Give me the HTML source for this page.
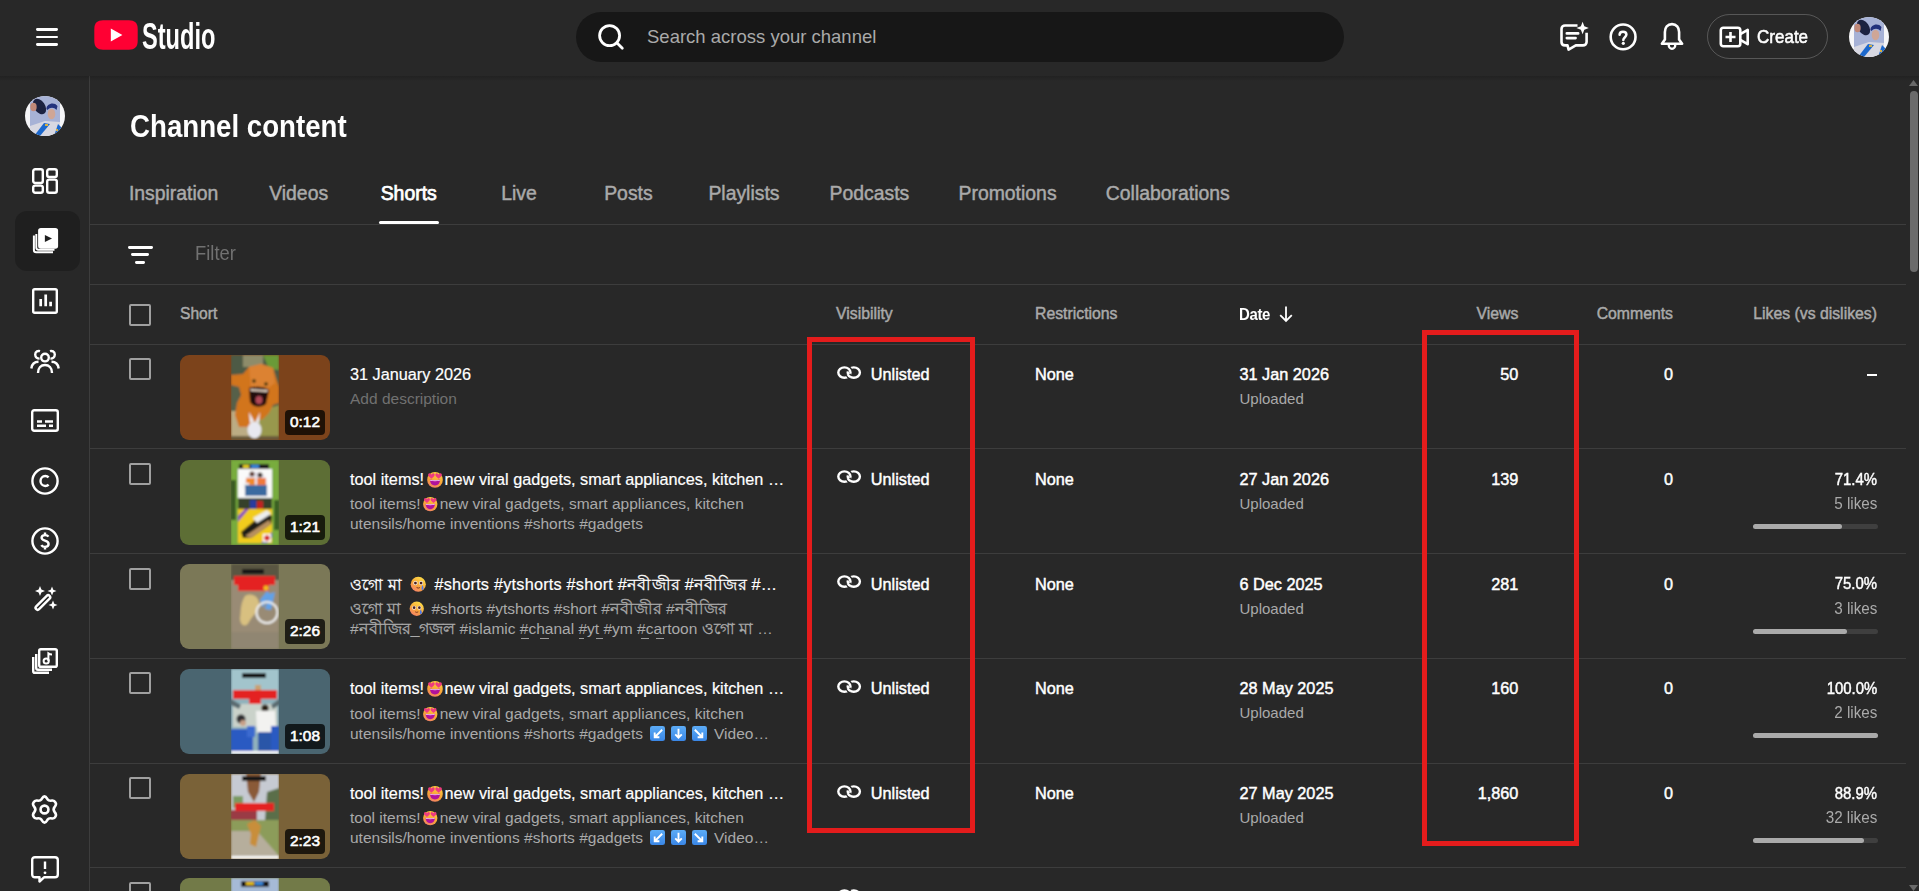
<!DOCTYPE html>
<html><head><meta charset="utf-8"><title>Channel content - YouTube Studio</title>
<style>
html,body{margin:0;padding:0;}html{overflow:hidden;background:#282828;}
body{width:1919px;height:891px;overflow:hidden;background:#282828;position:relative;font-family:"Liberation Sans",sans-serif;}
.t{position:absolute;white-space:nowrap;}
.r{position:absolute;}
svg{position:absolute;overflow:visible;}
</style></head><body>
<div class="r" style="left:0px;top:0px;width:1919px;height:76px;background:#282828;"></div>
<div class="r" style="left:0px;top:76px;width:1919px;height:5px;background:linear-gradient(rgba(0,0,0,0.16),rgba(0,0,0,0));z-index:3;"></div>
<div class="r" style="left:36px;top:28.1px;width:22px;height:2.8px;background:#fff;border-radius:1.4px;"></div>
<div class="r" style="left:36px;top:35.6px;width:22px;height:2.8px;background:#fff;border-radius:1.4px;"></div>
<div class="r" style="left:36px;top:43.0px;width:22px;height:2.8px;background:#fff;border-radius:1.4px;"></div>
<svg style="left:94px;top:20px" width="44" height="30" viewBox="0 0 44 30"><path d="M9 0.3H35C40.5 0.3 43.7 3 43.7 9V21C43.7 27 40.5 29.7 35 29.7H9C3.5 29.7 0.3 27 0.3 21V9C0.3 3 3.5 0.3 9 0.3Z" fill="#ff0033"/><path d="M16.8 8.6L28.4 15L16.8 21.4Z" fill="#fff"/></svg>
<div class="t " style="top:14.53px;left:141.60px;font-size:36px;line-height:43.2px;color:#fff;font-weight:700;transform:scaleX(0.655);transform-origin:0 0;">Studio</div>
<div class="r" style="left:576px;top:12px;width:768px;height:50px;background:#171717;border-radius:25px;"></div>
<svg style="left:596px;top:22px" width="30" height="30" viewBox="0 0 30 30"><circle cx="13.6" cy="13.6" r="10" fill="none" stroke="#fff" stroke-width="2.8"/><path d="M20.8 20.8L26.3 26.3" stroke="#fff" stroke-width="2.8" stroke-linecap="round"/></svg>
<div class="t " style="top:25.69px;left:647.00px;font-size:18.5px;line-height:22.2px;color:#aaaaaa;">Search across your channel</div>
<svg style="left:1558px;top:21px" width="32" height="32" viewBox="0 0 32 32"><path d="M19.5 4.5H7C5 4.5 3.5 6 3.5 8V21C3.5 23 5 24.4 7 24.4H9.5L10.6 28.6L17.8 24.4H25C27 24.4 28.6 23 28.6 21V11.8" fill="none" stroke="#fff" stroke-width="2.6" stroke-linejoin="round"/><path d="M8.8 12.4H20.2M8.8 17.1H17.6" stroke="#fff" stroke-width="2.6" stroke-linecap="round"/><path d="M24.6 0.8L26.3 5.3L30.8 7L26.3 8.7L24.6 13.2L22.9 8.7L18.4 7L22.9 5.3Z" fill="#fff"/></svg>
<svg style="left:1608px;top:22px" width="30" height="30" viewBox="0 0 30 30"><circle cx="15.1" cy="14.9" r="12.4" fill="none" stroke="#fff" stroke-width="2.6"/><path d="M11.6 12.8C11.6 10.8 13.1 9.7 15 9.7C16.9 9.7 18.4 10.9 18.4 12.6C18.4 15.1 15.3 15.4 15.3 18.1" fill="none" stroke="#fff" stroke-width="2.5" stroke-linecap="round"/><circle cx="15.3" cy="21.3" r="1.6" fill="#fff"/></svg>
<svg style="left:1658px;top:21px" width="28" height="32" viewBox="0 0 28 32"><path d="M14 3.1C9.6 3.1 6.9 6.5 6.9 11V18.6L3.9 22.8H24.1L21.1 18.6V11C21.1 6.5 18.4 3.1 14 3.1Z" fill="none" stroke="#fff" stroke-width="2.6" stroke-linejoin="round"/><path d="M10.7 23.4A3.3 4.4 0 0 0 17.3 23.4" fill="none" stroke="#fff" stroke-width="2.4"/></svg>
<div class="r" style="left:1707px;top:14px;width:121px;height:45px;background:transparent;box-sizing:border-box;border:1px solid rgba(255,255,255,0.22);border-radius:22.5px;"></div>
<svg style="left:1719px;top:26px" width="32" height="22" viewBox="0 0 32 22"><rect x="1.8" y="1.8" width="19.5" height="18.4" rx="2.5" fill="none" stroke="#fff" stroke-width="2.6"/><path d="M6.5 11H16.5M11.5 6V16" stroke="#fff" stroke-width="2.6"/><path d="M21.3 8.2L28.7 3.8V18.2L21.3 13.8" fill="none" stroke="#fff" stroke-width="2.6" stroke-linejoin="round"/></svg>
<div class="t " style="top:25.50px;left:1756.60px;font-size:18.6px;line-height:22.32px;color:#fff;-webkit-text-stroke:0.55px #fff;transform:scaleX(0.915);transform-origin:0 0;">Create</div>
<svg style="left:1849px;top:17px" width="40" height="40" viewBox="0 0 40 40"><defs><clipPath id="ca"><circle cx="20" cy="20" r="20"/></clipPath><filter id="fa"><feGaussianBlur stdDeviation="0.5"/></filter></defs><g clip-path="url(#ca)"><rect width="40" height="40" fill="#f6f6f8"/><g filter="url(#fa)"><rect x="5" y="0" width="30" height="40" fill="#a7b2d6"/><ellipse cx="14.5" cy="10.5" rx="5.5" ry="8.5" transform="rotate(-35 14.5 10.5)" fill="#1c2040"/><ellipse cx="8.5" cy="11" rx="3.2" ry="4.2" fill="#c08878"/><ellipse cx="26.5" cy="18" rx="3.8" ry="5.2" fill="#cfa696"/><path d="M21.5 13C21 8 29 5 32.5 10L31.5 14C29 11 25 11 22.5 14Z" fill="#24307c"/><path d="M5 30L20 25L35 26V40H5Z" fill="#d8d8e2"/><path d="M9 40L19 27L25 28L15 40Z" fill="#1f68cc"/><path d="M29 40L33 28L36 31V40Z" fill="#1f68cc"/><rect x="20" y="28" width="3" height="2" fill="#d8b040"/><rect x="31" y="33" width="2" height="2" fill="#d8b040"/></g></g></svg>
<div class="r" style="left:89px;top:76px;width:1px;height:815px;background:#3d3d3d;"></div>
<svg style="left:25px;top:96px" width="40" height="40" viewBox="0 0 40 40"><defs><clipPath id="cb"><circle cx="20" cy="20" r="20"/></clipPath><filter id="fb"><feGaussianBlur stdDeviation="0.5"/></filter></defs><g clip-path="url(#cb)"><rect width="40" height="40" fill="#f6f6f8"/><g filter="url(#fb)"><rect x="5" y="0" width="30" height="40" fill="#a7b2d6"/><ellipse cx="14.5" cy="10.5" rx="5.5" ry="8.5" transform="rotate(-35 14.5 10.5)" fill="#1c2040"/><ellipse cx="8.5" cy="11" rx="3.2" ry="4.2" fill="#c08878"/><ellipse cx="26.5" cy="18" rx="3.8" ry="5.2" fill="#cfa696"/><path d="M21.5 13C21 8 29 5 32.5 10L31.5 14C29 11 25 11 22.5 14Z" fill="#24307c"/><path d="M5 30L20 25L35 26V40H5Z" fill="#d8d8e2"/><path d="M9 40L19 27L25 28L15 40Z" fill="#1f68cc"/><path d="M29 40L33 28L36 31V40Z" fill="#1f68cc"/><rect x="20" y="28" width="3" height="2" fill="#d8b040"/><rect x="31" y="33" width="2" height="2" fill="#d8b040"/></g></g></svg>
<div class="r" style="left:15px;top:211px;width:65px;height:60px;background:#1f1f1f;border-radius:12px;"></div>
<svg style="left:32px;top:168px" width="26" height="26" viewBox="0 0 26 26"><rect x="1.2" y="1.2" width="9.6" height="13.8" rx="2" fill="none" stroke="#fff" stroke-width="2.4"/><rect x="15.2" y="1.2" width="9.6" height="7.8" rx="2" fill="none" stroke="#fff" stroke-width="2.4"/><rect x="1.2" y="17.6" width="9.6" height="7.2" rx="2" fill="none" stroke="#fff" stroke-width="2.4"/><rect x="15.2" y="11.6" width="9.6" height="13.2" rx="2" fill="none" stroke="#fff" stroke-width="2.4"/></svg>
<svg style="left:31.5px;top:227px" width="28" height="28" viewBox="0 0 28 28"><rect x="6.1" y="1" width="20" height="20.8" rx="2.8" fill="#fff"/><path d="M12.9 8L20 11.5L12.9 15Z" fill="#1f1f1f"/><path d="M1.9 8.5V23C1.9 24.4 2.7 25.2 4.1 25.2H21" fill="none" stroke="#fff" stroke-width="2"/><path d="M4.3 7V20.6C4.3 21.9 5 22.8 6.3 22.8H22.5" fill="none" stroke="#fff" stroke-width="1.9"/></svg>
<svg style="left:32px;top:288px" width="26" height="26" viewBox="0 0 26 26"><rect x="1.2" y="1.2" width="23.6" height="23.6" rx="1.5" fill="none" stroke="#fff" stroke-width="2.4"/><path d="M8.7 18.3V11M13.7 18.3V6.5M18.6 18.3V13.7" fill="none" stroke="#fff" stroke-width="2.7"/></svg>
<svg style="left:30px;top:349px" width="30" height="25" viewBox="0 0 30 25"><circle cx="15" cy="8.6" r="3.8" fill="none" stroke="#fff" stroke-width="2.4"/><path d="M8 24C8 18.8 11 16 15 16C19 16 22 18.8 22 24" fill="none" stroke="#fff" stroke-width="2.4"/><path d="M10 2.2C8.2 1.6 5.2 2.2 5.2 5.5C5.2 8 7.2 9.6 9.6 9.6" fill="none" stroke="#fff" stroke-width="2.4"/><path d="M20 2.2C21.8 1.6 24.8 2.2 24.8 5.5C24.8 8 22.8 9.6 20.4 9.6" fill="none" stroke="#fff" stroke-width="2.4"/><path d="M1.3 19.5C1.8 15.5 4.5 12.8 8.5 12.8" fill="none" stroke="#fff" stroke-width="2.4"/><path d="M28.7 19.5C28.2 15.5 25.5 12.8 21.5 12.8" fill="none" stroke="#fff" stroke-width="2.4"/></svg>
<svg style="left:31px;top:409px" width="28" height="23" viewBox="0 0 28 23"><rect x="1.2" y="1.2" width="25.6" height="20.6" rx="2" fill="none" stroke="#fff" stroke-width="2.4"/><path d="M6 12.5H11M14 12.5H22M6 16.8H15M18 16.8H22" fill="none" stroke="#fff" stroke-width="2.4"/></svg>
<svg style="left:31px;top:467px" width="28" height="28" viewBox="0 0 28 28"><circle cx="14" cy="14" r="12.6" fill="none" stroke="#fff" stroke-width="2.4"/><path d="M17.6 10.4C16.8 9.5 15.6 9 14.3 9C11.5 9 9.5 11.2 9.5 14C9.5 16.8 11.5 19 14.3 19C15.6 19 16.8 18.5 17.6 17.6" fill="none" stroke="#fff" stroke-width="2.4"/></svg>
<svg style="left:31px;top:527px" width="28" height="28" viewBox="0 0 28 28"><circle cx="14" cy="14" r="12.6" fill="none" stroke="#fff" stroke-width="2.4"/><path d="M17.5 9.6C16.8 8.6 15.6 8.1 14 8.1C12 8.1 10.6 9.2 10.6 10.8C10.6 14.4 17.6 13 17.6 17C17.6 18.8 16.1 19.9 14 19.9C12.3 19.9 11 19.2 10.3 18.1M14 5.6V8.1M14 19.9V22.4" fill="none" stroke="#fff" stroke-width="2.4"/></svg>
<svg style="left:33px;top:586px" width="26" height="26" viewBox="0 0 26 26"><path d="M3.2 23.2C2.3 22.3 2.3 21.2 3.2 20.3L13.7 9.8C14.6 8.9 15.7 8.9 16.6 9.8C17.5 10.7 17.5 11.8 16.6 12.7L6.1 23.2C5.2 24.1 4.1 24.1 3.2 23.2Z" fill="none" stroke="#fff" stroke-width="2.4"/><path d="M7 0L8.4 3.6L12 5L8.4 6.4L7 10L5.6 6.4L2 5L5.6 3.6Z" fill="#fff"/><path d="M19 0.5L20.3 3.7L23.5 5L20.3 6.3L19 9.5L17.7 6.3L14.5 5L17.7 3.7Z" fill="#fff"/><path d="M20 14.5L21.3 17.7L24.5 19L21.3 20.3L20 23.5L18.7 20.3L15.5 19L18.7 17.7Z" fill="#fff"/></svg>
<svg style="left:32px;top:648px" width="26" height="26" viewBox="0 0 26 26"><rect x="7.2" y="1.2" width="17.6" height="17.6" rx="1.6" fill="none" stroke="#fff" stroke-width="2.4"/><path d="M4.2 6V20C4.2 21.2 4.8 21.8 6 21.8H20" fill="none" stroke="#fff" stroke-width="2.4"/><path d="M1.2 9V23.2C1.2 24.3 1.7 24.8 2.8 24.8H17" fill="none" stroke="#fff" stroke-width="2.4"/><circle cx="14.2" cy="13" r="2.6" fill="none" stroke="#fff" stroke-width="2"/><path d="M16.4 13V5.4C17.5 6.2 18.8 6.5 20 6.5" fill="none" stroke="#fff" stroke-width="2"/></svg>
<svg style="left:31.2px;top:795.6px" width="27" height="28" viewBox="0 0 27 28"><g transform="translate(13.5 13.5) scale(1.09) translate(-13.5 -13.5)"><path d="M13.5 1.5C15 1.5 15.5 3 16.4 4.4C17.2 5.6 19 5.5 20.5 5.3C22.2 5.1 23 6 23.7 7.3C24.5 8.6 23.8 10 22.7 11.3C21.8 12.5 21.8 14.5 22.7 15.7C23.8 17 24.5 18.4 23.7 19.7C23 21 22.2 21.9 20.5 21.7C19 21.5 17.2 21.4 16.4 22.6C15.5 24 15 25.5 13.5 25.5C12 25.5 11.5 24 10.6 22.6C9.8 21.4 8 21.5 6.5 21.7C4.8 21.9 4 21 3.3 19.7C2.5 18.4 3.2 17 4.3 15.7C5.2 14.5 5.2 12.5 4.3 11.3C3.2 10 2.5 8.6 3.3 7.3C4 6 4.8 5.1 6.5 5.3C8 5.5 9.8 5.6 10.6 4.4C11.5 3 12 1.5 13.5 1.5Z" fill="none" stroke="#fff" stroke-width="2.4" stroke-linejoin="round"/><circle cx="13.5" cy="13.5" r="3.6" fill="none" stroke="#fff" stroke-width="2.4"/></g></svg>
<svg style="left:31px;top:856px" width="28" height="27" viewBox="0 0 28 27"><path d="M4 1.2H24C25.7 1.2 26.8 2.3 26.8 4V18.5C26.8 20.2 25.7 21.3 24 21.3H13L8.5 25.5V21.3H4C2.3 21.3 1.2 20.2 1.2 18.5V4C1.2 2.3 2.3 1.2 4 1.2Z" fill="none" stroke="#fff" stroke-width="2.4" stroke-linejoin="round"/><path d="M14 5.5V13" fill="none" stroke="#fff" stroke-width="2.4"/><circle cx="14" cy="16.8" r="1.4" fill="#fff"/></svg>
<div class="t " style="top:107.53px;left:130.00px;font-size:30.5px;line-height:36.6px;color:#fff;font-weight:700;transform:scaleX(0.907);transform-origin:0 0;">Channel content</div>
<div class="t " style="top:181.94px;left:128.90px;font-size:19.4px;line-height:23.28px;color:#aaaaaa;-webkit-text-stroke:0.45px currentColor;">Inspiration</div>
<div class="t " style="top:181.94px;left:269.20px;font-size:19.4px;line-height:23.28px;color:#aaaaaa;-webkit-text-stroke:0.45px currentColor;">Videos</div>
<div class="t " style="top:181.94px;left:380.70px;font-size:19.4px;line-height:23.28px;color:#fff;-webkit-text-stroke:0.45px currentColor;-webkit-text-stroke:0.75px #fff;">Shorts</div>
<div class="t " style="top:181.94px;left:501.20px;font-size:19.4px;line-height:23.28px;color:#aaaaaa;-webkit-text-stroke:0.45px currentColor;">Live</div>
<div class="t " style="top:181.94px;left:604.20px;font-size:19.4px;line-height:23.28px;color:#aaaaaa;-webkit-text-stroke:0.45px currentColor;">Posts</div>
<div class="t " style="top:181.94px;left:708.40px;font-size:19.4px;line-height:23.28px;color:#aaaaaa;-webkit-text-stroke:0.45px currentColor;">Playlists</div>
<div class="t " style="top:181.94px;left:829.50px;font-size:19.4px;line-height:23.28px;color:#aaaaaa;-webkit-text-stroke:0.45px currentColor;">Podcasts</div>
<div class="t " style="top:181.94px;left:958.50px;font-size:19.4px;line-height:23.28px;color:#aaaaaa;-webkit-text-stroke:0.45px currentColor;">Promotions</div>
<div class="t " style="top:181.94px;left:1105.80px;font-size:19.4px;line-height:23.28px;color:#aaaaaa;-webkit-text-stroke:0.45px currentColor;">Collaborations</div>
<div class="r" style="left:90px;top:224px;width:1816px;height:1px;background:#3d3d3d;"></div>
<div class="r" style="left:379px;top:221px;width:60px;height:3.1px;background:#fff;border-radius:1.6px;"></div>
<div class="r" style="left:127.5px;top:245.8px;width:25px;height:2.8px;background:#fff;border-radius:1.4px;"></div>
<div class="r" style="left:131.2px;top:253.3px;width:17.6px;height:2.9px;background:#fff;border-radius:1.45px;"></div>
<div class="r" style="left:135.1px;top:260.8px;width:9.8px;height:2.9px;background:#fff;border-radius:1.45px;"></div>
<div class="t " style="top:241.48px;left:195.00px;font-size:20.2px;line-height:24.24px;color:#717171;transform:scaleX(0.91);transform-origin:0 0;">Filter</div>
<div class="r" style="left:90px;top:284px;width:1816px;height:1px;background:#3d3d3d;"></div>
<div class="r" style="left:129px;top:304px;width:22px;height:22px;background:transparent;box-sizing:border-box;border:2px solid #a0a0a0;border-radius:2px;"></div>
<div class="t " style="top:305.23px;left:180.00px;font-size:15.6px;line-height:18.72px;color:#aaaaaa;-webkit-text-stroke:0.45px currentColor;">Short</div>
<div class="t " style="top:305.05px;left:836.00px;font-size:15.8px;line-height:18.96px;color:#aaaaaa;-webkit-text-stroke:0.45px currentColor;">Visibility</div>
<div class="t " style="top:305.05px;left:1035.00px;font-size:15.8px;line-height:18.96px;color:#aaaaaa;-webkit-text-stroke:0.45px currentColor;">Restrictions</div>
<div class="t " style="top:304.96px;left:1238.70px;font-size:16.1px;line-height:19.32px;color:#fff;font-weight:700;letter-spacing:-0.4px;transform:scaleX(0.93);transform-origin:0 0;">Date</div>
<svg style="left:1278px;top:305px" width="16" height="18" viewBox="0 0 16 18"><path d="M8 1.5V16M2.2 10.2L8 16L13.8 10.2" fill="none" stroke="#fff" stroke-width="1.8"/></svg>
<div class="t " style="top:305.05px;right:400.60px;text-align:right;font-size:15.8px;line-height:18.96px;color:#aaaaaa;-webkit-text-stroke:0.45px currentColor;">Views</div>
<div class="t " style="top:305.05px;right:246.00px;text-align:right;font-size:15.8px;line-height:18.96px;color:#aaaaaa;-webkit-text-stroke:0.45px currentColor;">Comments</div>
<div class="t " style="top:305.05px;right:42.00px;text-align:right;font-size:15.8px;line-height:18.96px;color:#aaaaaa;-webkit-text-stroke:0.45px currentColor;">Likes (vs dislikes)</div>
<div class="r" style="left:90px;top:344px;width:1816px;height:1px;background:#3d3d3d;"></div>
<svg width="0" height="0" style="left:0;top:0"><defs><linearGradient id="bq" x1="0" y1="0" x2="0" y2="1"><stop offset="0" stop-color="#5cacf6"/><stop offset="1" stop-color="#3a86e6"/></linearGradient><linearGradient id="fg" x1="0.7" y1="0" x2="0.3" y2="1"><stop offset="0" stop-color="#fdd13e"/><stop offset="0.6" stop-color="#f7a238"/><stop offset="1" stop-color="#f2806a"/></linearGradient><linearGradient id="fg2" x1="0.8" y1="0" x2="0.2" y2="1"><stop offset="0" stop-color="#fde048"/><stop offset="0.55" stop-color="#f9a83a"/><stop offset="1" stop-color="#f47e6e"/></linearGradient></defs></svg>
<div class="r" style="left:180px;top:354.9px;width:150px;height:85px;background:#7c431b;border-radius:9px;overflow:hidden"><svg style="left:51px;top:0" width="48" height="85" viewBox="0 0 48 85"><defs><filter id="bl0" x="-5%" y="-5%" width="110%" height="110%"><feGaussianBlur stdDeviation="0.9"/></filter><clipPath id="cp0"><rect width="48" height="85"/></clipPath></defs><g clip-path="url(#cp0)"><g filter="url(#bl0)"><rect width="48" height="85" fill="#4e5a44"/><rect x="12" y="0" width="20" height="12" fill="#8e8c6a"/><rect x="0" y="30" width="8" height="25" fill="#56604a"/><rect y="56" width="48" height="29" fill="#bcac84"/><path d="M28 56L48 50V85H26Z" fill="#98984e"/><rect y="81" width="48" height="4" fill="#6a5a3a"/><path d="M32 0H48V15L38 14Z" fill="#6a9a38"/><path d="M0 20L12 19L18 12L30 9L42 13L46 26L48 32V48L42 50L38 58L32 64L24 66L18 72L8 72L4 60L6 48L10 40L8 32L0 30Z" fill="#d2741f"/><path d="M18 12L30 9L42 13L44 28L36 34L20 32Z" fill="#dc8230"/><circle cx="23" cy="26" r="1.8" fill="#3a3010"/><circle cx="35" cy="29" r="1.8" fill="#3a3010"/><path d="M18 33C22 31 34 31 38 35L35 49C30 53 23 53 19 47Z" fill="#241010"/><path d="M19 34L37 35L36 37L20 36Z" fill="#e8d8c8"/><ellipse cx="28" cy="45" rx="3.5" ry="4" fill="#b04858"/><ellipse cx="23.5" cy="75" rx="7" ry="8.5" fill="#e8e8f0"/><path d="M19 68L18 57L23 66ZM25 66L29 57L28 68Z" fill="#eeeef4"/></g></g></svg></div>
<div class="r" style="left:129px;top:358.2px;width:22px;height:22px;background:transparent;box-sizing:border-box;border:2px solid #a0a0a0;border-radius:2px;"></div>
<div class="r" style="left:285px;top:409.9px;width:40px;height:25px;background:rgba(0,0,0,0.75);border-radius:4px;"></div>
<div class="t " style="top:412.82px;left:305.00px;font-size:15.4px;line-height:18.48px;color:#fff;-webkit-text-stroke:0.6px #fff;transform:translateX(-50%);">0:12</div>
<div class="t " style="top:365.12px;left:350.00px;font-size:16.25px;line-height:19.5px;color:#fff;-webkit-text-stroke:0.2px #fff;">31 January 2026</div>
<div class="t " style="top:390.43px;left:350.00px;font-size:15.5px;line-height:18.6px;color:#aaaaaa;"><span style="color:#717171">Add description</span></div>
<svg style="left:836.6px;top:365.7px" width="25" height="15" viewBox="0 0 25 15"><ellipse cx="16.8" cy="6.6" rx="6.1" ry="5.2" fill="none" stroke="#fff" stroke-width="2.4"/><path d="M10.5 2.0A6.1 5.2 0 0 1 13.2 4.8" fill="none" stroke="#282828" stroke-width="5"/><ellipse cx="7.4" cy="6.6" rx="6.1" ry="5.2" fill="none" stroke="#fff" stroke-width="2.4"/><path d="M13.7 11.1A6.1 5.2 0 0 1 11.0 8.4" fill="none" stroke="#282828" stroke-width="5"/><path d="M13.9 11.2A6.1 5.2 0 0 1 10.8 8.2" fill="none" stroke="#fff" stroke-width="2.4"/></svg>
<div class="t " style="top:365.12px;left:870.80px;font-size:16.25px;line-height:19.5px;color:#fff;-webkit-text-stroke:0.45px currentColor;">Unlisted</div>
<div class="t " style="top:365.12px;left:1035.00px;font-size:16.25px;line-height:19.5px;color:#fff;-webkit-text-stroke:0.45px currentColor;">None</div>
<div class="t " style="top:365.12px;left:1239.50px;font-size:16.25px;line-height:19.5px;color:#fff;-webkit-text-stroke:0.45px currentColor;">31 Jan 2026</div>
<div class="t " style="top:390.30px;left:1239.50px;font-size:15px;line-height:18.0px;color:#aaaaaa;">Uploaded</div>
<div class="t " style="top:365.12px;right:400.60px;text-align:right;font-size:16.25px;line-height:19.5px;color:#fff;-webkit-text-stroke:0.45px currentColor;">50</div>
<div class="t " style="top:365.12px;right:246.00px;text-align:right;font-size:16.25px;line-height:19.5px;color:#fff;-webkit-text-stroke:0.45px currentColor;">0</div>
<div class="r" style="left:1866.5px;top:374.3px;width:10.5px;height:1.4px;background:#fff;"></div>
<div class="r" style="left:90px;top:448px;width:1816px;height:1px;background:#3d3d3d;"></div>
<div class="r" style="left:180px;top:459.6px;width:150px;height:85px;background:#5d6e35;border-radius:9px;overflow:hidden"><svg style="left:51px;top:0" width="48" height="85" viewBox="0 0 48 85"><defs><filter id="bl1" x="-5%" y="-5%" width="110%" height="110%"><feGaussianBlur stdDeviation="0.9"/></filter><clipPath id="cp1"><rect width="48" height="85"/></clipPath></defs><g clip-path="url(#cp1)"><g filter="url(#bl1)"><rect width="48" height="85" fill="#78ac3c"/><rect x="0" y="20" width="5" height="40" fill="#3a5a20"/><rect x="43" y="40" width="5" height="30" fill="#3a6020"/><rect x="8" y="4" width="30" height="5" fill="#1a1a1a"/><rect x="12" y="5" width="6" height="3" fill="#e8d020"/><rect x="20" y="5" width="8" height="3" fill="#3a8ae0"/><rect x="7" y="9" width="34" height="29" fill="#fafafa"/><circle cx="25" cy="23" r="11" fill="#e8e6f0"/><circle cx="21" cy="14" r="2.5" fill="#5a3020"/><circle cx="29" cy="15" r="2.5" fill="#3a2a20"/><rect x="15" y="18" width="9" height="7" fill="#f08a2a"/><rect x="26" y="18" width="9" height="7" fill="#f07a3a"/><rect x="12" y="23" width="6" height="6" fill="#f2f2f2"/><rect x="14" y="25" width="22" height="11" fill="#3a6aa0"/><rect x="7" y="38" width="34" height="11" fill="#34402a"/><rect x="19" y="40" width="6" height="9" fill="#2a3aa0"/><rect x="26" y="41" width="6" height="8" fill="#c02020"/><rect x="7" y="49" width="34" height="34" fill="#f2cc1c"/><path d="M7 56L14 49H18L7 62Z" fill="#8a50c0"/><path d="M30 83L41 72V77L36 83Z" fill="#6a50c0"/><path d="M10 72L34 52L41 56L40 64L20 78L12 78Z" fill="#1e1a18"/><path d="M14 76L38 60L40 64L20 78Z" fill="#b89060"/><path d="M22 58L36 50L40 54L26 63Z" fill="#eeeeee"/><rect x="32" y="74" width="8" height="8" fill="#fff"/><circle cx="36" cy="78" r="2.8" fill="#d02020"/></g></g></svg></div>
<div class="r" style="left:129px;top:462.9px;width:22px;height:22px;background:transparent;box-sizing:border-box;border:2px solid #a0a0a0;border-radius:2px;"></div>
<div class="r" style="left:285px;top:514.6px;width:40px;height:25px;background:rgba(0,0,0,0.75);border-radius:4px;"></div>
<div class="t " style="top:517.52px;left:305.00px;font-size:15.4px;line-height:18.48px;color:#fff;-webkit-text-stroke:0.6px #fff;transform:translateX(-50%);">1:21</div>
<div class="t " style="top:469.82px;left:350.00px;font-size:16.25px;line-height:19.5px;color:#fff;-webkit-text-stroke:0.2px #fff;">tool items!<svg style="position:relative;display:inline-block;vertical-align:-2.9px;margin:0 1px 0 1.5px" width="18" height="18" viewBox="0 0 20 20"><circle cx="10" cy="11" r="8.7" fill="url(#fg)"/><path d="M6.0 9.81L2.96 6.92C1.63 5.36 2.8 3.18 4.52 3.8C5.3 4.11 6.0 4.74 6.0 5.21C6.0 4.74 6.7 4.11 7.48 3.8C9.2 3.18 10.37 5.36 9.04 6.92Z" fill="#ee3a80"/><path d="M14.0 9.81L10.96 6.92C9.63 5.36 10.8 3.18 12.52 3.8C13.3 4.11 14.0 4.74 14.0 5.21C14.0 4.74 14.7 4.11 15.48 3.8C17.2 3.18 18.37 5.36 17.04 6.92Z" fill="#ee3a80"/><path d="M4.3 10.6Q10 12 15.7 10.6Q15.4 17.2 10 17.2Q4.6 17.2 4.3 10.6Z" fill="#b0129c"/><path d="M4.5 10.7Q10 12 15.5 10.7L15.4 11.9Q10 13 4.6 11.9Z" fill="#f4c8f0"/></svg>new viral gadgets, smart appliances, kitchen …</div>
<div class="t " style="top:495.13px;left:350.00px;font-size:15.5px;line-height:18.6px;color:#aaaaaa;">tool items!<svg style="position:relative;display:inline-block;vertical-align:-2.6px;margin:0 1px 0 1.5px" width="16.5" height="16.5" viewBox="0 0 20 20"><circle cx="10" cy="11" r="8.7" fill="url(#fg)"/><path d="M6.0 9.81L2.96 6.92C1.63 5.36 2.8 3.18 4.52 3.8C5.3 4.11 6.0 4.74 6.0 5.21C6.0 4.74 6.7 4.11 7.48 3.8C9.2 3.18 10.37 5.36 9.04 6.92Z" fill="#ee3a80"/><path d="M14.0 9.81L10.96 6.92C9.63 5.36 10.8 3.18 12.52 3.8C13.3 4.11 14.0 4.74 14.0 5.21C14.0 4.74 14.7 4.11 15.48 3.8C17.2 3.18 18.37 5.36 17.04 6.92Z" fill="#ee3a80"/><path d="M4.3 10.6Q10 12 15.7 10.6Q15.4 17.2 10 17.2Q4.6 17.2 4.3 10.6Z" fill="#b0129c"/><path d="M4.5 10.7Q10 12 15.5 10.7L15.4 11.9Q10 13 4.6 11.9Z" fill="#f4c8f0"/></svg>new viral gadgets, smart appliances, kitchen</div>
<div class="t " style="top:515.23px;left:350.00px;font-size:15.5px;line-height:18.6px;color:#aaaaaa;">utensils/home inventions #shorts #gadgets</div>
<svg style="left:836.6px;top:470.4px" width="25" height="15" viewBox="0 0 25 15"><ellipse cx="16.8" cy="6.6" rx="6.1" ry="5.2" fill="none" stroke="#fff" stroke-width="2.4"/><path d="M10.5 2.0A6.1 5.2 0 0 1 13.2 4.8" fill="none" stroke="#282828" stroke-width="5"/><ellipse cx="7.4" cy="6.6" rx="6.1" ry="5.2" fill="none" stroke="#fff" stroke-width="2.4"/><path d="M13.7 11.1A6.1 5.2 0 0 1 11.0 8.4" fill="none" stroke="#282828" stroke-width="5"/><path d="M13.9 11.2A6.1 5.2 0 0 1 10.8 8.2" fill="none" stroke="#fff" stroke-width="2.4"/></svg>
<div class="t " style="top:469.82px;left:870.80px;font-size:16.25px;line-height:19.5px;color:#fff;-webkit-text-stroke:0.45px currentColor;">Unlisted</div>
<div class="t " style="top:469.82px;left:1035.00px;font-size:16.25px;line-height:19.5px;color:#fff;-webkit-text-stroke:0.45px currentColor;">None</div>
<div class="t " style="top:469.82px;left:1239.50px;font-size:16.25px;line-height:19.5px;color:#fff;-webkit-text-stroke:0.45px currentColor;">27 Jan 2026</div>
<div class="t " style="top:495.00px;left:1239.50px;font-size:15px;line-height:18.0px;color:#aaaaaa;">Uploaded</div>
<div class="t " style="top:469.82px;right:400.60px;text-align:right;font-size:16.25px;line-height:19.5px;color:#fff;-webkit-text-stroke:0.45px currentColor;">139</div>
<div class="t " style="top:469.82px;right:246.00px;text-align:right;font-size:16.25px;line-height:19.5px;color:#fff;-webkit-text-stroke:0.45px currentColor;">0</div>
<div class="t " style="top:469.59px;right:42.00px;text-align:right;font-size:16.6px;line-height:19.92px;color:#fff;-webkit-text-stroke:0.45px currentColor;transform:scaleX(0.9);transform-origin:100% 50%;">71.4%</div>
<div class="t " style="top:493.86px;right:42.00px;text-align:right;font-size:16px;line-height:19.2px;color:#aaaaaa;transform:scaleX(0.95);transform-origin:100% 50%;">5 likes</div>
<div class="r" style="left:1753px;top:524.0px;width:125px;height:5px;background:#3f3f3f;border-radius:2.5px;"></div>
<div class="r" style="left:1753px;top:524.0px;width:89.2px;height:5px;background:#aaaaaa;border-radius:2.5px;"></div>
<div class="r" style="left:90px;top:553px;width:1816px;height:1px;background:#3d3d3d;"></div>
<div class="r" style="left:180px;top:564.3px;width:150px;height:85px;background:#7b7857;border-radius:9px;overflow:hidden"><svg style="left:51px;top:0" width="48" height="85" viewBox="0 0 48 85"><defs><filter id="bl2" x="-5%" y="-5%" width="110%" height="110%"><feGaussianBlur stdDeviation="0.9"/></filter><clipPath id="cp2"><rect width="48" height="85"/></clipPath></defs><g clip-path="url(#cp2)"><g filter="url(#bl2)"><rect width="48" height="85" fill="#998b74"/><rect width="48" height="16" fill="#5a5642"/><rect x="11" y="5" width="22" height="5" fill="#141414"/><rect x="3" y="12" width="41" height="9" fill="#e42424"/><rect x="7" y="21" width="31" height="6" fill="#e42424"/><circle cx="35" cy="24" r="2.5" fill="#f0c020"/><path d="M14 32C20 28 28 32 28 40C28 48 22 50 18 58C15 64 9 62 9 54C10 48 9 40 14 32Z" fill="#d8c080"/><path d="M29 36L36 27L39 30L32 44Z" fill="#62a2e8"/><path d="M38 30L44 28L40 46L34 45Z" fill="#62a2e8"/><circle cx="36" cy="48.5" r="10.5" fill="none" stroke="#ececec" stroke-width="2.2"/><rect y="68" width="48" height="17" fill="#908672"/></g></g></svg></div>
<div class="r" style="left:129px;top:567.6px;width:22px;height:22px;background:transparent;box-sizing:border-box;border:2px solid #a0a0a0;border-radius:2px;"></div>
<div class="r" style="left:285px;top:619.3px;width:40px;height:25px;background:rgba(0,0,0,0.75);border-radius:4px;"></div>
<div class="t " style="top:622.22px;left:305.00px;font-size:15.4px;line-height:18.48px;color:#fff;-webkit-text-stroke:0.6px #fff;transform:translateX(-50%);">2:26</div>
<div class="t " style="top:574.52px;left:350.00px;font-size:16.25px;line-height:19.5px;color:#fff;-webkit-text-stroke:0.2px #fff;letter-spacing:0.22px;"><span style="-webkit-text-stroke:0.3px currentColor">ওগো মা</span> <svg style="position:relative;display:inline-block;vertical-align:-2.6px;margin:0 3px 0 3px" width="16.5" height="16.5" viewBox="0 0 20 20"><circle cx="10" cy="10" r="9.2" fill="url(#fg2)"/><circle cx="6.6" cy="8.6" r="2.6" fill="#f4f0ee"/><circle cx="13.4" cy="8.6" r="2.6" fill="#f4f0ee"/><circle cx="6.6" cy="8.6" r="1.7" fill="#4a2020"/><circle cx="13.4" cy="8.6" r="1.7" fill="#4a2020"/><path d="M8 14Q10 15.3 12 14" fill="none" stroke="#6a2a20" stroke-width="1.1"/><path d="M15.2 10.8Q17 14 16.2 16.4Q14.8 17.4 14 16Q13.6 13.5 15.2 10.8Z" fill="#4a78f0"/></svg> #shorts #ytshorts #short #<span style="-webkit-text-stroke:0.3px currentColor">নবীজীর</span> #<span style="-webkit-text-stroke:0.3px currentColor">নবীজির</span> #…</div>
<div class="t " style="top:599.83px;left:350.00px;font-size:15.5px;line-height:18.6px;color:#aaaaaa;"><span style="-webkit-text-stroke:0.3px currentColor">ওগো মা</span> <svg style="position:relative;display:inline-block;vertical-align:-2.5px;margin:0 3px 0 3px" width="15.5" height="15.5" viewBox="0 0 20 20"><circle cx="10" cy="10" r="9.2" fill="url(#fg2)"/><circle cx="6.6" cy="8.6" r="2.6" fill="#f4f0ee"/><circle cx="13.4" cy="8.6" r="2.6" fill="#f4f0ee"/><circle cx="6.6" cy="8.6" r="1.7" fill="#4a2020"/><circle cx="13.4" cy="8.6" r="1.7" fill="#4a2020"/><path d="M8 14Q10 15.3 12 14" fill="none" stroke="#6a2a20" stroke-width="1.1"/><path d="M15.2 10.8Q17 14 16.2 16.4Q14.8 17.4 14 16Q13.6 13.5 15.2 10.8Z" fill="#4a78f0"/></svg> #shorts #ytshorts #short #<span style="-webkit-text-stroke:0.3px currentColor">নবীজীর</span> #<span style="-webkit-text-stroke:0.3px currentColor">নবীজির</span></div>
<div class="t " style="top:619.93px;left:350.00px;font-size:15.5px;line-height:18.6px;color:#aaaaaa;">#<span style="-webkit-text-stroke:0.3px currentColor">নবীজির_গজল</span> #islamic #chanal #yt #ym #cartoon <span style="-webkit-text-stroke:0.3px currentColor">ওগো মা</span> …</div>
<svg style="left:836.6px;top:575.1px" width="25" height="15" viewBox="0 0 25 15"><ellipse cx="16.8" cy="6.6" rx="6.1" ry="5.2" fill="none" stroke="#fff" stroke-width="2.4"/><path d="M10.5 2.0A6.1 5.2 0 0 1 13.2 4.8" fill="none" stroke="#282828" stroke-width="5"/><ellipse cx="7.4" cy="6.6" rx="6.1" ry="5.2" fill="none" stroke="#fff" stroke-width="2.4"/><path d="M13.7 11.1A6.1 5.2 0 0 1 11.0 8.4" fill="none" stroke="#282828" stroke-width="5"/><path d="M13.9 11.2A6.1 5.2 0 0 1 10.8 8.2" fill="none" stroke="#fff" stroke-width="2.4"/></svg>
<div class="t " style="top:574.52px;left:870.80px;font-size:16.25px;line-height:19.5px;color:#fff;-webkit-text-stroke:0.45px currentColor;">Unlisted</div>
<div class="t " style="top:574.52px;left:1035.00px;font-size:16.25px;line-height:19.5px;color:#fff;-webkit-text-stroke:0.45px currentColor;">None</div>
<div class="t " style="top:574.52px;left:1239.50px;font-size:16.25px;line-height:19.5px;color:#fff;-webkit-text-stroke:0.45px currentColor;">6 Dec 2025</div>
<div class="t " style="top:599.70px;left:1239.50px;font-size:15px;line-height:18.0px;color:#aaaaaa;">Uploaded</div>
<div class="t " style="top:574.52px;right:400.60px;text-align:right;font-size:16.25px;line-height:19.5px;color:#fff;-webkit-text-stroke:0.45px currentColor;">281</div>
<div class="t " style="top:574.52px;right:246.00px;text-align:right;font-size:16.25px;line-height:19.5px;color:#fff;-webkit-text-stroke:0.45px currentColor;">0</div>
<div class="t " style="top:574.29px;right:42.00px;text-align:right;font-size:16.6px;line-height:19.92px;color:#fff;-webkit-text-stroke:0.45px currentColor;transform:scaleX(0.9);transform-origin:100% 50%;">75.0%</div>
<div class="t " style="top:598.56px;right:42.00px;text-align:right;font-size:16px;line-height:19.2px;color:#aaaaaa;transform:scaleX(0.95);transform-origin:100% 50%;">3 likes</div>
<div class="r" style="left:1753px;top:628.7px;width:125px;height:5px;background:#3f3f3f;border-radius:2.5px;"></div>
<div class="r" style="left:1753px;top:628.7px;width:93.8px;height:5px;background:#aaaaaa;border-radius:2.5px;"></div>
<div class="r" style="left:90px;top:658px;width:1816px;height:1px;background:#3d3d3d;"></div>
<div class="r" style="left:180px;top:669.0px;width:150px;height:85px;background:#4a6570;border-radius:9px;overflow:hidden"><svg style="left:51px;top:0" width="48" height="85" viewBox="0 0 48 85"><defs><filter id="bl3" x="-5%" y="-5%" width="110%" height="110%"><feGaussianBlur stdDeviation="0.9"/></filter><clipPath id="cp3"><rect width="48" height="85"/></clipPath></defs><g clip-path="url(#cp3)"><g filter="url(#bl3)"><rect width="48" height="85" fill="#90b2bc"/><rect y="0" width="48" height="22" fill="#a2c4cc"/><rect x="24" y="16" width="6" height="6" fill="#c8a070"/><rect x="11" y="4" width="24" height="5" fill="#141414"/><rect x="2" y="21" width="44" height="9" fill="#e42424"/><rect x="18" y="30" width="12" height="5" fill="#e42424"/><rect x="2" y="35" width="44" height="23" fill="#cad2ca"/><path d="M0 30L10 36L8 40L0 36Z" fill="#5a6a70"/><path d="M48 30L40 36L42 40L48 36Z" fill="#5a6a70"/><circle cx="34" cy="39" r="3.6" fill="#2a2018"/><path d="M25 42H44L45 64H26Z" fill="#f2f2f0"/><rect x="27" y="63" width="13" height="20" fill="#2a56a8"/><circle cx="10" cy="50" r="4.5" fill="#2e2e30"/><circle cx="12" cy="54" r="3" fill="#c8a088"/><path d="M0 60H22L22 85H0Z" fill="#2a5ac2"/><path d="M16 57H24V68H16Z" fill="#3a6ad0"/><rect x="40" y="57" width="8" height="28" fill="#2a5ac2"/><rect x="0" y="82" width="48" height="3" fill="#fafafa"/></g></g></svg></div>
<div class="r" style="left:129px;top:672.3px;width:22px;height:22px;background:transparent;box-sizing:border-box;border:2px solid #a0a0a0;border-radius:2px;"></div>
<div class="r" style="left:285px;top:724.0px;width:40px;height:25px;background:rgba(0,0,0,0.75);border-radius:4px;"></div>
<div class="t " style="top:726.92px;left:305.00px;font-size:15.4px;line-height:18.48px;color:#fff;-webkit-text-stroke:0.6px #fff;transform:translateX(-50%);">1:08</div>
<div class="t " style="top:679.22px;left:350.00px;font-size:16.25px;line-height:19.5px;color:#fff;-webkit-text-stroke:0.2px #fff;">tool items!<svg style="position:relative;display:inline-block;vertical-align:-2.9px;margin:0 1px 0 1.5px" width="18" height="18" viewBox="0 0 20 20"><circle cx="10" cy="11" r="8.7" fill="url(#fg)"/><path d="M6.0 9.81L2.96 6.92C1.63 5.36 2.8 3.18 4.52 3.8C5.3 4.11 6.0 4.74 6.0 5.21C6.0 4.74 6.7 4.11 7.48 3.8C9.2 3.18 10.37 5.36 9.04 6.92Z" fill="#ee3a80"/><path d="M14.0 9.81L10.96 6.92C9.63 5.36 10.8 3.18 12.52 3.8C13.3 4.11 14.0 4.74 14.0 5.21C14.0 4.74 14.7 4.11 15.48 3.8C17.2 3.18 18.37 5.36 17.04 6.92Z" fill="#ee3a80"/><path d="M4.3 10.6Q10 12 15.7 10.6Q15.4 17.2 10 17.2Q4.6 17.2 4.3 10.6Z" fill="#b0129c"/><path d="M4.5 10.7Q10 12 15.5 10.7L15.4 11.9Q10 13 4.6 11.9Z" fill="#f4c8f0"/></svg>new viral gadgets, smart appliances, kitchen …</div>
<div class="t " style="top:704.53px;left:350.00px;font-size:15.5px;line-height:18.6px;color:#aaaaaa;">tool items!<svg style="position:relative;display:inline-block;vertical-align:-2.6px;margin:0 1px 0 1.5px" width="16.5" height="16.5" viewBox="0 0 20 20"><circle cx="10" cy="11" r="8.7" fill="url(#fg)"/><path d="M6.0 9.81L2.96 6.92C1.63 5.36 2.8 3.18 4.52 3.8C5.3 4.11 6.0 4.74 6.0 5.21C6.0 4.74 6.7 4.11 7.48 3.8C9.2 3.18 10.37 5.36 9.04 6.92Z" fill="#ee3a80"/><path d="M14.0 9.81L10.96 6.92C9.63 5.36 10.8 3.18 12.52 3.8C13.3 4.11 14.0 4.74 14.0 5.21C14.0 4.74 14.7 4.11 15.48 3.8C17.2 3.18 18.37 5.36 17.04 6.92Z" fill="#ee3a80"/><path d="M4.3 10.6Q10 12 15.7 10.6Q15.4 17.2 10 17.2Q4.6 17.2 4.3 10.6Z" fill="#b0129c"/><path d="M4.5 10.7Q10 12 15.5 10.7L15.4 11.9Q10 13 4.6 11.9Z" fill="#f4c8f0"/></svg>new viral gadgets, smart appliances, kitchen</div>
<div class="t " style="top:724.63px;left:350.00px;font-size:15.5px;line-height:18.6px;color:#aaaaaa;">utensils/home inventions #shorts #gadgets <svg style="position:relative;display:inline-block;vertical-align:-2px;margin:0 6px 0 3px" width="15" height="15" viewBox="0 0 16 16"><rect width="16" height="16" rx="2.5" fill="url(#bq)"/><path d="M13 4L5 12M5 7V12H10" fill="none" stroke="#fff" stroke-width="2"/></svg><svg style="position:relative;display:inline-block;vertical-align:-2px;margin:0 6px 0 0px" width="15" height="15" viewBox="0 0 16 16"><rect width="16" height="16" rx="2.5" fill="url(#bq)"/><path d="M8 3V12M4.5 9L8 12.5L11.5 9" fill="none" stroke="#fff" stroke-width="2"/></svg><svg style="position:relative;display:inline-block;vertical-align:-2px;margin:0 6.8px 0 0px" width="15" height="15" viewBox="0 0 16 16"><rect width="16" height="16" rx="2.5" fill="url(#bq)"/><path d="M3 4L11 12M11 7V12H6" fill="none" stroke="#fff" stroke-width="2"/></svg>Video…</div>
<svg style="left:836.6px;top:679.8px" width="25" height="15" viewBox="0 0 25 15"><ellipse cx="16.8" cy="6.6" rx="6.1" ry="5.2" fill="none" stroke="#fff" stroke-width="2.4"/><path d="M10.5 2.0A6.1 5.2 0 0 1 13.2 4.8" fill="none" stroke="#282828" stroke-width="5"/><ellipse cx="7.4" cy="6.6" rx="6.1" ry="5.2" fill="none" stroke="#fff" stroke-width="2.4"/><path d="M13.7 11.1A6.1 5.2 0 0 1 11.0 8.4" fill="none" stroke="#282828" stroke-width="5"/><path d="M13.9 11.2A6.1 5.2 0 0 1 10.8 8.2" fill="none" stroke="#fff" stroke-width="2.4"/></svg>
<div class="t " style="top:679.22px;left:870.80px;font-size:16.25px;line-height:19.5px;color:#fff;-webkit-text-stroke:0.45px currentColor;">Unlisted</div>
<div class="t " style="top:679.22px;left:1035.00px;font-size:16.25px;line-height:19.5px;color:#fff;-webkit-text-stroke:0.45px currentColor;">None</div>
<div class="t " style="top:679.22px;left:1239.50px;font-size:16.25px;line-height:19.5px;color:#fff;-webkit-text-stroke:0.45px currentColor;">28 May 2025</div>
<div class="t " style="top:704.40px;left:1239.50px;font-size:15px;line-height:18.0px;color:#aaaaaa;">Uploaded</div>
<div class="t " style="top:679.22px;right:400.60px;text-align:right;font-size:16.25px;line-height:19.5px;color:#fff;-webkit-text-stroke:0.45px currentColor;">160</div>
<div class="t " style="top:679.22px;right:246.00px;text-align:right;font-size:16.25px;line-height:19.5px;color:#fff;-webkit-text-stroke:0.45px currentColor;">0</div>
<div class="t " style="top:678.99px;right:42.00px;text-align:right;font-size:16.6px;line-height:19.92px;color:#fff;-webkit-text-stroke:0.45px currentColor;transform:scaleX(0.9);transform-origin:100% 50%;">100.0%</div>
<div class="t " style="top:703.26px;right:42.00px;text-align:right;font-size:16px;line-height:19.2px;color:#aaaaaa;transform:scaleX(0.95);transform-origin:100% 50%;">2 likes</div>
<div class="r" style="left:1753px;top:733.4px;width:125px;height:5px;background:#3f3f3f;border-radius:2.5px;"></div>
<div class="r" style="left:1753px;top:733.4px;width:125.0px;height:5px;background:#aaaaaa;border-radius:2.5px;"></div>
<div class="r" style="left:90px;top:763px;width:1816px;height:1px;background:#3d3d3d;"></div>
<div class="r" style="left:180px;top:773.7px;width:150px;height:85px;background:#7a6238;border-radius:9px;overflow:hidden"><svg style="left:51px;top:0" width="48" height="85" viewBox="0 0 48 85"><defs><filter id="bl4" x="-5%" y="-5%" width="110%" height="110%"><feGaussianBlur stdDeviation="0.9"/></filter><clipPath id="cp4"><rect width="48" height="85"/></clipPath></defs><g clip-path="url(#cp4)"><g filter="url(#bl4)"><rect width="48" height="85" fill="#c6cad2"/><path d="M36 18L48 14V46H34Z" fill="#5a6e48"/><path d="M2 22H12L12 34H2Z" fill="#7a9a60"/><rect x="0" y="36" width="26" height="12" fill="#9a3a44"/><rect y="46" width="48" height="39" fill="#8c9c5a"/><path d="M0 57H26L48 82V85H0Z" fill="#b6ae9c"/><path d="M15 0H30L28 18L23 28L17 18Z" fill="#8a5a38"/><rect x="11" y="2" width="24" height="5" fill="#141414"/><rect x="4" y="29" width="39" height="8" fill="#e42424"/><path d="M16 50L24 46L30 52L27 64L25 73L19 70L20 60Z" fill="#c88e3a"/><rect x="0" y="82" width="48" height="3" fill="#fafafa"/></g></g></svg></div>
<div class="r" style="left:129px;top:777.0px;width:22px;height:22px;background:transparent;box-sizing:border-box;border:2px solid #a0a0a0;border-radius:2px;"></div>
<div class="r" style="left:285px;top:828.7px;width:40px;height:25px;background:rgba(0,0,0,0.75);border-radius:4px;"></div>
<div class="t " style="top:831.62px;left:305.00px;font-size:15.4px;line-height:18.48px;color:#fff;-webkit-text-stroke:0.6px #fff;transform:translateX(-50%);">2:23</div>
<div class="t " style="top:783.92px;left:350.00px;font-size:16.25px;line-height:19.5px;color:#fff;-webkit-text-stroke:0.2px #fff;">tool items!<svg style="position:relative;display:inline-block;vertical-align:-2.9px;margin:0 1px 0 1.5px" width="18" height="18" viewBox="0 0 20 20"><circle cx="10" cy="11" r="8.7" fill="url(#fg)"/><path d="M6.0 9.81L2.96 6.92C1.63 5.36 2.8 3.18 4.52 3.8C5.3 4.11 6.0 4.74 6.0 5.21C6.0 4.74 6.7 4.11 7.48 3.8C9.2 3.18 10.37 5.36 9.04 6.92Z" fill="#ee3a80"/><path d="M14.0 9.81L10.96 6.92C9.63 5.36 10.8 3.18 12.52 3.8C13.3 4.11 14.0 4.74 14.0 5.21C14.0 4.74 14.7 4.11 15.48 3.8C17.2 3.18 18.37 5.36 17.04 6.92Z" fill="#ee3a80"/><path d="M4.3 10.6Q10 12 15.7 10.6Q15.4 17.2 10 17.2Q4.6 17.2 4.3 10.6Z" fill="#b0129c"/><path d="M4.5 10.7Q10 12 15.5 10.7L15.4 11.9Q10 13 4.6 11.9Z" fill="#f4c8f0"/></svg>new viral gadgets, smart appliances, kitchen …</div>
<div class="t " style="top:809.23px;left:350.00px;font-size:15.5px;line-height:18.6px;color:#aaaaaa;">tool items!<svg style="position:relative;display:inline-block;vertical-align:-2.6px;margin:0 1px 0 1.5px" width="16.5" height="16.5" viewBox="0 0 20 20"><circle cx="10" cy="11" r="8.7" fill="url(#fg)"/><path d="M6.0 9.81L2.96 6.92C1.63 5.36 2.8 3.18 4.52 3.8C5.3 4.11 6.0 4.74 6.0 5.21C6.0 4.74 6.7 4.11 7.48 3.8C9.2 3.18 10.37 5.36 9.04 6.92Z" fill="#ee3a80"/><path d="M14.0 9.81L10.96 6.92C9.63 5.36 10.8 3.18 12.52 3.8C13.3 4.11 14.0 4.74 14.0 5.21C14.0 4.74 14.7 4.11 15.48 3.8C17.2 3.18 18.37 5.36 17.04 6.92Z" fill="#ee3a80"/><path d="M4.3 10.6Q10 12 15.7 10.6Q15.4 17.2 10 17.2Q4.6 17.2 4.3 10.6Z" fill="#b0129c"/><path d="M4.5 10.7Q10 12 15.5 10.7L15.4 11.9Q10 13 4.6 11.9Z" fill="#f4c8f0"/></svg>new viral gadgets, smart appliances, kitchen</div>
<div class="t " style="top:829.33px;left:350.00px;font-size:15.5px;line-height:18.6px;color:#aaaaaa;">utensils/home inventions #shorts #gadgets <svg style="position:relative;display:inline-block;vertical-align:-2px;margin:0 6px 0 3px" width="15" height="15" viewBox="0 0 16 16"><rect width="16" height="16" rx="2.5" fill="url(#bq)"/><path d="M13 4L5 12M5 7V12H10" fill="none" stroke="#fff" stroke-width="2"/></svg><svg style="position:relative;display:inline-block;vertical-align:-2px;margin:0 6px 0 0px" width="15" height="15" viewBox="0 0 16 16"><rect width="16" height="16" rx="2.5" fill="url(#bq)"/><path d="M8 3V12M4.5 9L8 12.5L11.5 9" fill="none" stroke="#fff" stroke-width="2"/></svg><svg style="position:relative;display:inline-block;vertical-align:-2px;margin:0 6.8px 0 0px" width="15" height="15" viewBox="0 0 16 16"><rect width="16" height="16" rx="2.5" fill="url(#bq)"/><path d="M3 4L11 12M11 7V12H6" fill="none" stroke="#fff" stroke-width="2"/></svg>Video…</div>
<svg style="left:836.6px;top:784.5px" width="25" height="15" viewBox="0 0 25 15"><ellipse cx="16.8" cy="6.6" rx="6.1" ry="5.2" fill="none" stroke="#fff" stroke-width="2.4"/><path d="M10.5 2.0A6.1 5.2 0 0 1 13.2 4.8" fill="none" stroke="#282828" stroke-width="5"/><ellipse cx="7.4" cy="6.6" rx="6.1" ry="5.2" fill="none" stroke="#fff" stroke-width="2.4"/><path d="M13.7 11.1A6.1 5.2 0 0 1 11.0 8.4" fill="none" stroke="#282828" stroke-width="5"/><path d="M13.9 11.2A6.1 5.2 0 0 1 10.8 8.2" fill="none" stroke="#fff" stroke-width="2.4"/></svg>
<div class="t " style="top:783.92px;left:870.80px;font-size:16.25px;line-height:19.5px;color:#fff;-webkit-text-stroke:0.45px currentColor;">Unlisted</div>
<div class="t " style="top:783.92px;left:1035.00px;font-size:16.25px;line-height:19.5px;color:#fff;-webkit-text-stroke:0.45px currentColor;">None</div>
<div class="t " style="top:783.92px;left:1239.50px;font-size:16.25px;line-height:19.5px;color:#fff;-webkit-text-stroke:0.45px currentColor;">27 May 2025</div>
<div class="t " style="top:809.10px;left:1239.50px;font-size:15px;line-height:18.0px;color:#aaaaaa;">Uploaded</div>
<div class="t " style="top:783.92px;right:400.60px;text-align:right;font-size:16.25px;line-height:19.5px;color:#fff;-webkit-text-stroke:0.45px currentColor;">1,860</div>
<div class="t " style="top:783.92px;right:246.00px;text-align:right;font-size:16.25px;line-height:19.5px;color:#fff;-webkit-text-stroke:0.45px currentColor;">0</div>
<div class="t " style="top:783.69px;right:42.00px;text-align:right;font-size:16.6px;line-height:19.92px;color:#fff;-webkit-text-stroke:0.45px currentColor;transform:scaleX(0.9);transform-origin:100% 50%;">88.9%</div>
<div class="t " style="top:807.96px;right:42.00px;text-align:right;font-size:16px;line-height:19.2px;color:#aaaaaa;transform:scaleX(0.95);transform-origin:100% 50%;">32 likes</div>
<div class="r" style="left:1753px;top:838.1px;width:125px;height:5px;background:#3f3f3f;border-radius:2.5px;"></div>
<div class="r" style="left:1753px;top:838.1px;width:111.1px;height:5px;background:#aaaaaa;border-radius:2.5px;"></div>
<div class="r" style="left:90px;top:867px;width:1816px;height:1px;background:#3d3d3d;"></div>
<div class="r" style="left:180px;top:878.4px;width:150px;height:85px;background:#727a48;border-radius:9px;overflow:hidden"><svg style="left:51px;top:0" width="48" height="85" viewBox="0 0 48 85"><defs><filter id="bl5" x="-5%" y="-5%" width="110%" height="110%"><feGaussianBlur stdDeviation="0.9"/></filter><clipPath id="cp5"><rect width="48" height="85"/></clipPath></defs><g clip-path="url(#cp5)"><g filter="url(#bl5)"><rect width="48" height="85" fill="#a6bad6"/><rect x="10" y="3" width="28" height="6" fill="#141414"/><rect x="15" y="4" width="8" height="3" fill="#e8c020"/><rect x="24" y="4" width="8" height="3" fill="#3a8ae0"/></g></g></svg></div>
<div class="r" style="left:129px;top:881.7px;width:22px;height:22px;background:transparent;box-sizing:border-box;border:2px solid #a0a0a0;border-radius:2px;"></div>
<div class="t " style="top:888.62px;left:350.00px;font-size:16.25px;line-height:19.5px;color:#fff;-webkit-text-stroke:0.2px #fff;">tool items!<svg style="position:relative;display:inline-block;vertical-align:-2.9px;margin:0 1px 0 1.5px" width="18" height="18" viewBox="0 0 20 20"><circle cx="10" cy="11" r="8.7" fill="url(#fg)"/><path d="M6.0 9.81L2.96 6.92C1.63 5.36 2.8 3.18 4.52 3.8C5.3 4.11 6.0 4.74 6.0 5.21C6.0 4.74 6.7 4.11 7.48 3.8C9.2 3.18 10.37 5.36 9.04 6.92Z" fill="#ee3a80"/><path d="M14.0 9.81L10.96 6.92C9.63 5.36 10.8 3.18 12.52 3.8C13.3 4.11 14.0 4.74 14.0 5.21C14.0 4.74 14.7 4.11 15.48 3.8C17.2 3.18 18.37 5.36 17.04 6.92Z" fill="#ee3a80"/><path d="M4.3 10.6Q10 12 15.7 10.6Q15.4 17.2 10 17.2Q4.6 17.2 4.3 10.6Z" fill="#b0129c"/><path d="M4.5 10.7Q10 12 15.5 10.7L15.4 11.9Q10 13 4.6 11.9Z" fill="#f4c8f0"/></svg>new viral gadgets, smart appliances, kitchen …</div>
<div class="t " style="top:913.93px;left:350.00px;font-size:15.5px;line-height:18.6px;color:#aaaaaa;">tool items!<svg style="position:relative;display:inline-block;vertical-align:-2.6px;margin:0 1px 0 1.5px" width="16.5" height="16.5" viewBox="0 0 20 20"><circle cx="10" cy="11" r="8.7" fill="url(#fg)"/><path d="M6.0 9.81L2.96 6.92C1.63 5.36 2.8 3.18 4.52 3.8C5.3 4.11 6.0 4.74 6.0 5.21C6.0 4.74 6.7 4.11 7.48 3.8C9.2 3.18 10.37 5.36 9.04 6.92Z" fill="#ee3a80"/><path d="M14.0 9.81L10.96 6.92C9.63 5.36 10.8 3.18 12.52 3.8C13.3 4.11 14.0 4.74 14.0 5.21C14.0 4.74 14.7 4.11 15.48 3.8C17.2 3.18 18.37 5.36 17.04 6.92Z" fill="#ee3a80"/><path d="M4.3 10.6Q10 12 15.7 10.6Q15.4 17.2 10 17.2Q4.6 17.2 4.3 10.6Z" fill="#b0129c"/><path d="M4.5 10.7Q10 12 15.5 10.7L15.4 11.9Q10 13 4.6 11.9Z" fill="#f4c8f0"/></svg>new viral gadgets, smart appliances, kitchen</div>
<div class="t " style="top:934.03px;left:350.00px;font-size:15.5px;line-height:18.6px;color:#aaaaaa;">utensils/home inventions #shorts #gadgets <svg style="position:relative;display:inline-block;vertical-align:-2px;margin:0 6px 0 3px" width="15" height="15" viewBox="0 0 16 16"><rect width="16" height="16" rx="2.5" fill="url(#bq)"/><path d="M13 4L5 12M5 7V12H10" fill="none" stroke="#fff" stroke-width="2"/></svg><svg style="position:relative;display:inline-block;vertical-align:-2px;margin:0 6px 0 0px" width="15" height="15" viewBox="0 0 16 16"><rect width="16" height="16" rx="2.5" fill="url(#bq)"/><path d="M8 3V12M4.5 9L8 12.5L11.5 9" fill="none" stroke="#fff" stroke-width="2"/></svg><svg style="position:relative;display:inline-block;vertical-align:-2px;margin:0 6.8px 0 0px" width="15" height="15" viewBox="0 0 16 16"><rect width="16" height="16" rx="2.5" fill="url(#bq)"/><path d="M3 4L11 12M11 7V12H6" fill="none" stroke="#fff" stroke-width="2"/></svg>Video…</div>
<svg style="left:836.6px;top:889.2px" width="25" height="15" viewBox="0 0 25 15"><ellipse cx="16.8" cy="6.6" rx="6.1" ry="5.2" fill="none" stroke="#fff" stroke-width="2.4"/><path d="M10.5 2.0A6.1 5.2 0 0 1 13.2 4.8" fill="none" stroke="#282828" stroke-width="5"/><ellipse cx="7.4" cy="6.6" rx="6.1" ry="5.2" fill="none" stroke="#fff" stroke-width="2.4"/><path d="M13.7 11.1A6.1 5.2 0 0 1 11.0 8.4" fill="none" stroke="#282828" stroke-width="5"/><path d="M13.9 11.2A6.1 5.2 0 0 1 10.8 8.2" fill="none" stroke="#fff" stroke-width="2.4"/></svg>
<div class="t " style="top:888.62px;left:870.80px;font-size:16.25px;line-height:19.5px;color:#fff;-webkit-text-stroke:0.45px currentColor;">Unlisted</div>
<div class="t " style="top:888.62px;left:1035.00px;font-size:16.25px;line-height:19.5px;color:#fff;-webkit-text-stroke:0.45px currentColor;">None</div>
<div class="t " style="top:888.62px;left:1239.50px;font-size:16.25px;line-height:19.5px;color:#fff;-webkit-text-stroke:0.45px currentColor;">28 May 2025</div>
<div class="t " style="top:913.80px;left:1239.50px;font-size:15px;line-height:18.0px;color:#aaaaaa;">Uploaded</div>
<div class="t " style="top:888.62px;right:400.60px;text-align:right;font-size:16.25px;line-height:19.5px;color:#fff;-webkit-text-stroke:0.45px currentColor;">160</div>
<div class="t " style="top:888.62px;right:246.00px;text-align:right;font-size:16.25px;line-height:19.5px;color:#fff;-webkit-text-stroke:0.45px currentColor;">0</div>
<div class="r" style="left:1866.5px;top:897.8px;width:10.5px;height:1.4px;background:#fff;"></div>
<div class="r" style="left:521px;top:637.6px;width:8.4px;height:1.2px;background:#9a9a9a;"></div>
<div class="r" style="left:540px;top:637.6px;width:8.5px;height:1.2px;background:#9a9a9a;"></div>
<div class="r" style="left:578.8px;top:637.6px;width:5.0px;height:1.2px;background:#9a9a9a;"></div>
<div class="r" style="left:596px;top:637.6px;width:7px;height:1.2px;background:#9a9a9a;"></div>
<div class="r" style="left:640.6px;top:637.6px;width:8.4px;height:1.2px;background:#9a9a9a;"></div>
<div class="r" style="left:656px;top:637.6px;width:7.8px;height:1.2px;background:#9a9a9a;"></div>
<div class="r" style="left:806.5px;top:337.4px;width:168px;height:495.3px;background:transparent;box-sizing:border-box;border:5.3px solid #e41c1c;z-index:5;"></div>
<div class="r" style="left:1422.4px;top:329.6px;width:157.1px;height:516.9px;background:transparent;box-sizing:border-box;border:5.3px solid #e41c1c;z-index:5;"></div>
<svg style="left:1908px;top:79px" width="11" height="8" viewBox="0 0 11 8"><path d="M1 7L5.5 1L10 7Z" fill="#6a6a6a"/></svg>
<div class="r" style="left:1909.5px;top:91px;width:8px;height:181px;background:#6b6b6b;border-radius:4px;"></div>
<svg style="left:1908px;top:884px" width="11" height="7" viewBox="0 0 11 7"><path d="M1 1L5.5 7L10 1Z" fill="#6a6a6a"/></svg>
</body></html>
